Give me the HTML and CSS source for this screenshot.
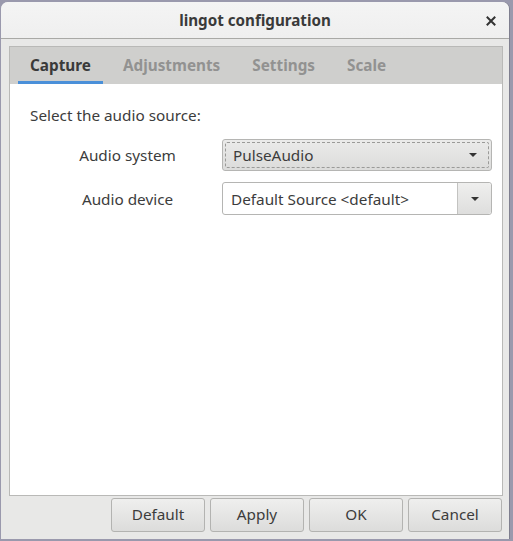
FILE: index.html
```html
<!DOCTYPE html>
<html>
<head>
<meta charset="utf-8">
<link rel="stylesheet" href="styles.css">
</head>
<body>
<div class="window">
  <header class="titlebar">
    <span class="title">lingot configuration</span>
    <span class="close">
      <svg width="10" height="10" viewBox="0 0 10 10"><path d="M1.5 1.5 L8.5 8.5 M8.5 1.5 L1.5 8.5" stroke="#333" stroke-width="2" stroke-linecap="square"/></svg>
    </span>
  </header>
  <main class="body">
    <section class="notebook">
      <nav class="tabs">
        <span class="tab active">Capture</span>
        <span class="tab">Adjustments</span>
        <span class="tab">Settings</span>
        <span class="tab">Scale</span>
      </nav>
      <div class="page">
        <p class="intro">Select the audio source:</p>
        <div class="form">
          <span class="label">Audio system</span>
          <div class="combo focus">
            <span class="combo-text">PulseAudio</span>
            <span class="arrow"></span>
          </div>
          <span class="label">Audio device</span>
          <div class="combo entry">
            <span class="combo-text">Default Source &lt;default&gt;</span>
            <span class="combo-btn"><span class="arrow"></span></span>
          </div>
        </div>
      </div>
    </section>
    <footer class="actions">
      <button class="btn">Default</button>
      <button class="btn">Apply</button>
      <button class="btn">OK</button>
      <button class="btn">Cancel</button>
    </footer>
  </main>
</div>
</body>
</html>
```
FILE: styles.css
```css
html, body {
  margin: 0;
  padding: 0;
  background: #9a99ad;
  width: 513px;
  height: 541px;
  overflow: hidden;
}
body {
  font-family: "Noto Sans", "Open Sans", sans-serif;
  font-size: 15.3px;
  color: #3c3c3c;
}
.window {
  margin: 2px 4px 0 1px;
  width: 508px;
  height: 537px;
  display: flex;
  flex-direction: column;
  border-radius: 7px 7px 0 0;
  overflow: hidden;
  background: #e8e8e7;
  box-shadow: 1px 0 0 #7f7f8f;
}
.titlebar {
  height: 36px;
  flex: none;
  background: linear-gradient(#f4f4f4, #efefef);
  border-bottom: 1px solid #a9a9a6;
  display: flex;
  align-items: center;
  justify-content: center;
  position: relative;
}
.title {
  font-weight: bold;
  font-size: 15.2px;
  color: #3a3a3a;
}
.close {
  position: absolute;
  right: 13px;
  top: 14px;
  width: 10px;
  height: 10px;
  display: flex;
}
.body {
  flex: 1;
  display: flex;
  flex-direction: column;
  padding: 7px 6px 7px 8px;
}
.notebook {
  flex: 1;
  border: 1px solid #b9b9b7;
  display: flex;
  flex-direction: column;
  background: #fff;
}
.tabs {
  height: 37px;
  flex: none;
  background: #cfcfcd;
  display: flex;
  padding-left: 8px;
  gap: 8px;
}
.tab {
  padding: 0 12px;
  display: flex;
  align-items: center;
  font-weight: bold;
  font-size: 15.3px;
  color: #929291;
  border-bottom: 3px solid transparent;
  padding-top: 1px;
}
.tab.active {
  color: #3a3a3a;
  border-bottom-color: #4a90d9;
}
.page {
  flex: 1;
  padding: 21px 10px 0 20px;
}
.intro {
  margin: 0 0 13px 0;
  line-height: 21px;
}
.form {
  display: grid;
  grid-template-columns: 192px 1fr;
  row-gap: 11px;
  align-items: center;
}
.label {
  text-align: center;
  padding-left: 3px;
}
.combo {
  height: 30px;
  border: 1px solid #b5b5b3;
  border-radius: 3px;
  display: flex;
  align-items: center;
  position: relative;
}
.combo.focus {
  background: linear-gradient(#ebebea, #dcdcdb);
  padding: 0 14px 0 10px;
}
.combo.focus::after {
  content: "";
  position: absolute;
  inset: 2px;
  border: 1px dashed #9a9a98;
  border-radius: 2px;
}
.combo-text {
  flex: 1;
}
.combo.entry {
  height: 31px;
  background: #fff;
  padding-left: 8px;
}
.combo-btn {
  width: 33px;
  align-self: stretch;
  border-left: 1px solid #c3c3c1;
  background: linear-gradient(#efefee, #dededd);
  border-radius: 0 3px 3px 0;
  display: flex;
  align-items: center;
  justify-content: center;
}
.arrow {
  width: 0;
  height: 0;
  border-left: 4px solid transparent;
  border-right: 4px solid transparent;
  border-top: 4px solid #333;
}
.actions {
  flex: none;
  display: flex;
  justify-content: flex-end;
  gap: 5px;
  padding-top: 2px;
  padding-right: 1px;
}
.btn {
  width: 94px;
  height: 34px;
  font-family: inherit;
  font-size: 15.3px;
  color: #3c3c3c;
  background: linear-gradient(#efefee, #dcdcdb);
  border: 1px solid #b3b3b1;
  border-radius: 3px;
  padding: 0 0 3px 0;
}
```
